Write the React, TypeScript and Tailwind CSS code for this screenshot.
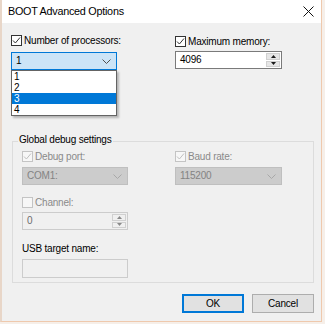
import React from "react";

const font = { fontFamily: '"Liberation Sans", Arial, sans-serif' };

function Check({ checked, disabled }: { checked?: boolean; disabled?: boolean }) {
  return (
    <div
      className={
        "w-[11px] h-[11px] shrink-0 border flex items-center justify-center " +
        (disabled ? "border-[#c4c4c4] bg-[#f7f7f7]" : "border-[#333333] bg-white")
      }
    >
      {checked && (
        <svg width="9" height="9" viewBox="0 0 9 9">
          <path
            d="M1 4.5 L3.4 7 L8 1.5"
            fill="none"
            stroke={disabled ? "#c0c0c0" : "#333333"}
            strokeWidth="1"
          />
        </svg>
      )}
    </div>
  );
}

function Chevron({ color }: { color: string }) {
  return (
    <svg width="9" height="5" viewBox="0 0 9 5">
      <path d="M0.5 0.5 L4.5 4.5 L8.5 0.5" fill="none" stroke={color} strokeWidth="1" />
    </svg>
  );
}

function SpinButtons({ disabled }: { disabled?: boolean }) {
  const c = disabled ? "#8a8a8a" : "#1a1a1a";
  const bg = disabled ? "bg-[#f0f0f0]" : "bg-[#e6e6e6]";
  return (
    <div className="w-[15px] h-full flex flex-col gap-[1px] py-[1px] pr-[1px]">
      <div className={"flex-1 flex items-center justify-center border border-[#d0d0d0] " + bg}>
        <svg width="5" height="3" viewBox="0 0 5 3">
          <path d="M0 3 L2.5 0 L5 3 Z" fill={c} />
        </svg>
      </div>
      <div className={"flex-1 flex items-center justify-center border border-[#d0d0d0] " + bg}>
        <svg width="5" height="3" viewBox="0 0 5 3">
          <path d="M0 0 L2.5 3 L5 0 Z" fill={c} />
        </svg>
      </div>
    </div>
  );
}

export default function App() {
  return (
    <div className="w-[325px] h-[324px] bg-[#f6efe9] overflow-hidden" style={font}>
      <div className="w-[322px] h-[322px] border-l-2 border-r border-b border-l-[#e8d6c8] border-r-[#efc9ad] border-b-[#efc9ad] bg-[#f0f0f0] flex flex-col">
        {/* title bar */}
        <div className="h-[23px] bg-white flex items-center justify-between pl-[6px] pr-[6px]">
          <span className="text-[10.8px] tracking-[-0.25px] text-black leading-none whitespace-nowrap">BOOT Advanced Options</span>
          <svg width="11" height="11" viewBox="0 0 11 11" className="mr-[1px]">
            <path d="M0.5 0.5 L10.5 10.5 M10.5 0.5 L0.5 10.5" stroke="#111" strokeWidth="1" />
          </svg>
        </div>

        {/* body */}
        <div className="pl-[9px] pt-[12px] text-[10px] tracking-[-0.2px] text-black whitespace-nowrap">
          {/* top row */}
          <div className="flex">
            <div className="w-[106px] relative">
              <div className="flex items-center gap-[2px] h-[11px]">
                <Check checked />
                <span className="leading-none">Number of processors:</span>
              </div>
              <div className="mt-[6px] h-[18px] bg-[#cce4f7] border border-[#0078d7] flex items-center justify-between pl-[4px] pr-[5px]">
                <span className="leading-none">1</span>
                <Chevron color="#505050" />
              </div>
              <div className="absolute left-0 top-[35px] w-[106px] bg-white border border-[#646464] shadow-[2px_2px_2px_rgba(0,0,0,0.25)] z-10">
                {["1", "2", "3", "4"].map((v) => (
                  <div
                    key={v}
                    className={
                      "h-[11px] flex items-center pl-[2px] leading-none " +
                      (v === "3" ? "bg-[#0078d7] text-white" : "text-black")
                    }
                  >
                    {v}
                  </div>
                ))}
              </div>
            </div>

            <div className="ml-[58px] w-[107px]">
              <div className="flex items-center gap-[2px] h-[11px] mt-[1px]">
                <Check checked />
                <span className="leading-none">Maximum memory:</span>
              </div>
              <div className="mt-[4px] h-[18px] bg-white border border-[#7a7a7a] flex items-center justify-between pl-[4px]">
                <span className="leading-none">4096</span>
                <SpinButtons />
              </div>
            </div>
          </div>

          {/* group box */}
          <div className="relative mt-[71px] ml-[1px] w-[302px] h-[142px] border border-[#dcdcdc]">
            <span className="absolute -top-[7px] left-[5px] px-[1px] bg-[#f0f0f0] leading-none text-black">
              Global debug settings
            </span>
            <div className="pl-[9px] pt-[9px] text-[#8a8a8a]">
              <div className="flex">
                <div className="w-[106px]">
                  <div className="flex items-center gap-[2px] h-[11px]">
                    <Check checked disabled />
                    <span className="leading-none">Debug port:</span>
                  </div>
                  <div className="mt-[5px] h-[18px] bg-[#cccccc] border border-[#bfbfbf] flex items-center justify-between pl-[4px] pr-[5px]">
                    <span className="leading-none text-[#838383]">COM1:</span>
                    <Chevron color="#a8a8a8" />
                  </div>
                </div>
                <div className="ml-[47px] w-[107px]">
                  <div className="flex items-center gap-[2px] h-[11px]">
                    <Check checked disabled />
                    <span className="leading-none">Baud rate:</span>
                  </div>
                  <div className="mt-[5px] h-[18px] bg-[#cccccc] border border-[#bfbfbf] flex items-center justify-between pl-[4px] pr-[5px]">
                    <span className="leading-none text-[#838383]">115200</span>
                    <Chevron color="#a8a8a8" />
                  </div>
                </div>
              </div>

              <div className="mt-[12px] w-[106px]">
                <div className="flex items-center gap-[2px] h-[11px]">
                  <Check disabled />
                  <span className="leading-none">Channel:</span>
                </div>
                <div className="mt-[4px] h-[18px] bg-[#f0f0f0] border border-[#cccccc] flex items-center justify-between pl-[4px]">
                  <span className="leading-none text-[#6d6d6d]">0</span>
                  <SpinButtons disabled />
                </div>
              </div>

              <div className="mt-[13px] w-[106px]">
                <div className="h-[11px] flex items-center text-black leading-none">USB target name:</div>
                <div className="mt-[5px] h-[19px] bg-[#f0f0f0] border border-[#cccccc]" />
              </div>
            </div>
          </div>

          {/* buttons */}
          <div className="flex justify-end gap-[8px] mt-[11px] w-[303px]">
            <div className="w-[62px] h-[19px] bg-[#e1e1e1] border-2 border-[#0078d7] flex items-center justify-center leading-none">
              OK
            </div>
            <div className="w-[62px] h-[19px] bg-[#e1e1e1] border border-[#adadad] flex items-center justify-center leading-none">
              Cancel
            </div>
          </div>
        </div>
      </div>
    </div>
  );
}
